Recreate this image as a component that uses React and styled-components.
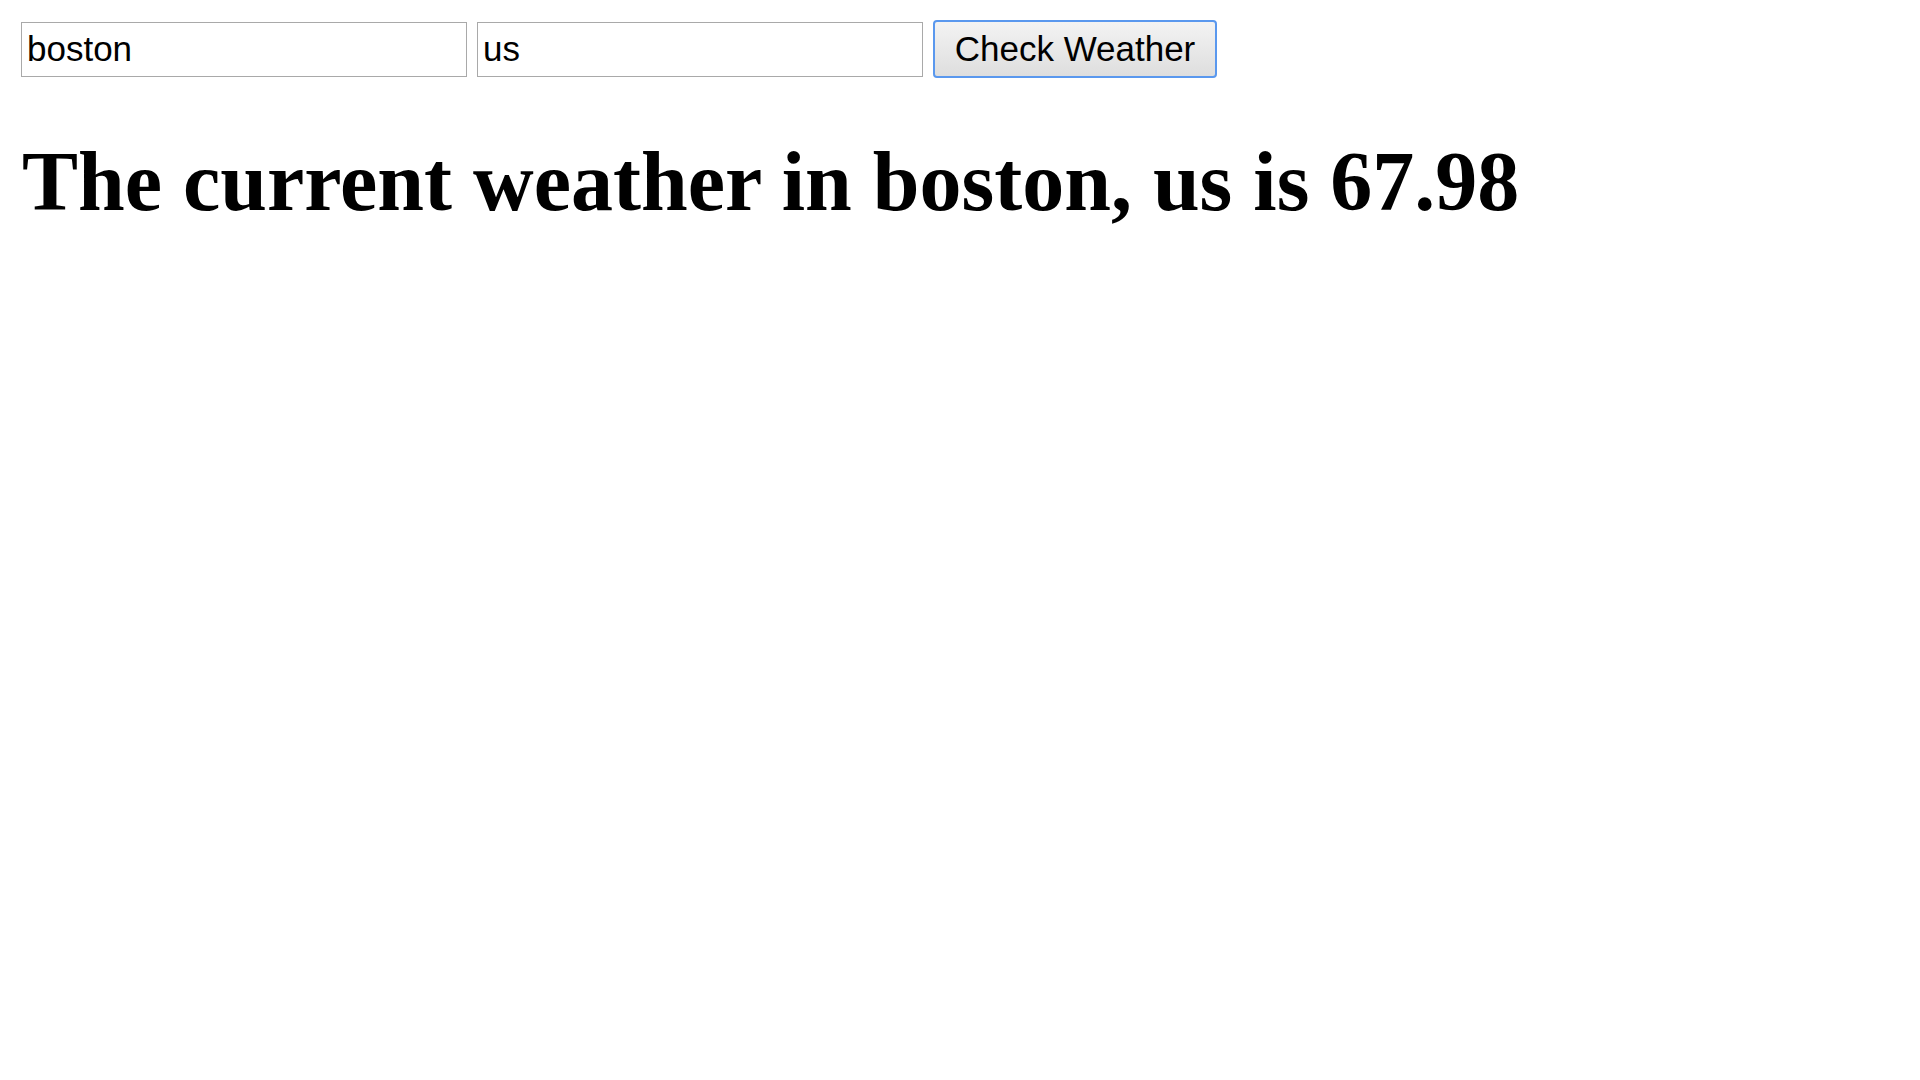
import React from 'react'
import styled, { createGlobalStyle } from 'styled-components'

const GlobalStyle = createGlobalStyle`
  html, body {
    margin: 0;
    padding: 0;
    background: #ffffff;
  }
`

const Page = styled.div`
  padding: 20px 21px;
  font-family: "Liberation Serif", "Times New Roman", serif;
  color: #000;
`

const Form = styled.form`
  display: flex;
  align-items: center;
  gap: 10px;
  height: 58px;
`

const TextInput = styled.input`
  box-sizing: border-box;
  width: 446px;
  height: 55px;
  margin: 0;
  padding: 0 5px;
  border: 1px solid #a9a9a9;
  background: #fff;
  font-family: "Liberation Sans", Arial, sans-serif;
  font-size: 35px;
  color: #000;
  outline: none;
`

const Button = styled.button`
  box-sizing: border-box;
  width: 284px;
  height: 58px;
  margin: 0;
  padding: 0;
  border: 2px solid #5a98ee;
  border-radius: 4px;
  background: linear-gradient(#f3f3f3, #dedede);
  font-family: "Liberation Sans", Arial, sans-serif;
  font-size: 35px;
  color: #000;
  cursor: pointer;
`

const Title = styled.h1`
  margin: 55px 0 0;
  font-size: 84px;
  font-weight: bold;
  line-height: normal;
  padding-left: 1px;
`

class App extends React.Component {
  constructor(props) {
    super(props)
    this.state = {
      city: 'boston',
      country: 'us',
      temp: '67.98',
    }
  }

  render() {
    const { city, country, temp } = this.state
    return (
      <Page>
        <GlobalStyle />
        <Form onSubmit={(e) => { e.preventDefault() }}>
          <TextInput
            type="text"
            value={city}
            onChange={(e) => { this.setState({ city: e.target.value }) }}
          />
          <TextInput
            type="text"
            value={country}
            onChange={(e) => { this.setState({ country: e.target.value }) }}
          />
          <Button type="submit">Check Weather</Button>
        </Form>
        <Title>The current weather in {city}, {country} is {temp}</Title>
      </Page>
    )
  }
}

export default App
